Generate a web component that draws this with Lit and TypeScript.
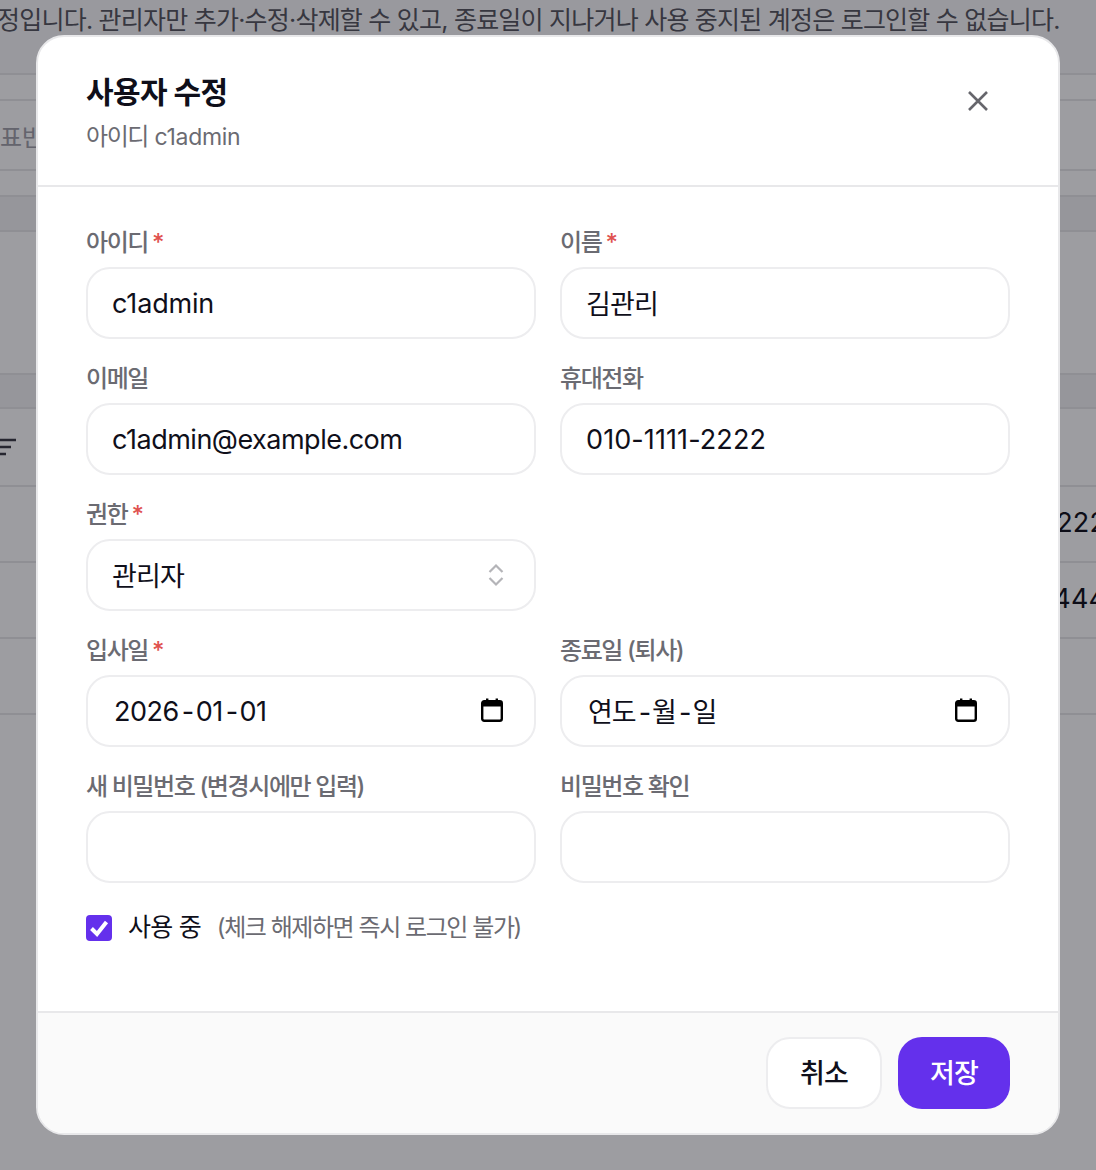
import { LitElement, html, css } from "lit";
import { customElement } from "lit/decorators.js";

const calendar = html`<svg class="cal" viewBox="0 0 22 24" width="22" height="24" aria-hidden="true">
  <path d="M5 0.5h2.4v3H5zM14.6 0.5H17v3h-2.4z" fill="#000"/>
  <rect x="1.2" y="3.2" width="19.6" height="19.6" rx="2" fill="none" stroke="#000" stroke-width="2.4"/>
  <rect x="1" y="3" width="20" height="5.5" fill="#000"/>
</svg>`;

@customElement("app-root")
export class AppRoot extends LitElement {
  static styles = css`
    :host {
      display: block;
      position: relative;
      width: 1096px;
      height: 1170px;
      overflow: hidden;
      background: #fff;
      font-family: Inter, "Noto Sans CJK KR", sans-serif;
      color: #0f0f1a;
    }
    .page { display: flex; flex-direction: column; }
    .notice {
      height: 73px;
      padding-top: 2px;
      margin-left: -3px;
      box-sizing: border-box;
      font-size: 25px;
      letter-spacing: -0.78px;
      line-height: 36px;
      color: #55555e;
      white-space: nowrap;
      background: #f9f9fa;
    }
    .row { border-top: 2px solid #e8e8ea; box-sizing: border-box; display: flex; align-items: center; justify-content: space-between; }
    .band { background: #f4f4f6; }
    .r1 { height: 26px; }
    .r2 { height: 70px; font-size: 24px; color: #a0a0a8; }
    .r3 { height: 26px; }
    .r4 { height: 35px; }
    .r5 { height: 143px; }
    .r6 { height: 34px; }
    .r7 { height: 78px; }
    .r8 { height: 76px; font-size: 27px; justify-content: flex-end; padding-bottom: 4px; }
    .r9 { height: 76px; }
    .r10 { height: 2px; }
    .num { white-space: nowrap; margin-right: -10px; letter-spacing: 0.1px; }
    .overlay {
      position: absolute;
      inset: 0;
      background: rgba(9, 9, 20, 0.4);
    }
    .modal {
      position: absolute;
      left: 36px;
      top: 35px;
      width: 1024px;
      height: 1100px;
      box-sizing: border-box;
      display: flex;
      flex-direction: column;
      background: #fff;
      border: 2px solid #e8e8ea;
      border-radius: 28px;
      overflow: hidden;
    }
    header {
      height: 150px;
      box-sizing: border-box;
      flex: none;
      display: flex;
      justify-content: space-between;
      align-items: flex-start;
      padding: 35px 48px 0;
      border-bottom: 2px solid #e8e8ea;
    }
    h2 { margin: 0; font-size: 30px; line-height: 40px; font-weight: 700; letter-spacing: -0.6px; }
    .sub { margin-top: 7px; font-size: 24px; line-height: 36px; color: #6b6b72; letter-spacing: -1.4px; }
    .sub-id { font-size: 23px; letter-spacing: -0.3px; margin-left: 1px; }
    .close { border: 0; background: none; padding: 0; width: 44px; height: 44px; margin: 7px 10px 0 0; display: flex; align-items: center; justify-content: center; }
    .body { flex: 1; padding: 40px 48px 0; }
    .grid { display: grid; grid-template-columns: 1fr 1fr; column-gap: 24px; row-gap: 24px; }
    label { display: block; height: 32px; margin-bottom: 8px; font-size: 24px; line-height: 32px; font-weight: 500; letter-spacing: -1.4px; color: #6b6b72; white-space: nowrap; }
    .req { color: #e0524f; margin-left: 4px; letter-spacing: 0; }
    .field {
      height: 72px;
      box-sizing: border-box;
      width: 100%;
      border: 2px solid #ededef;
      border-radius: 24px;
      padding: 0 24px;
      background: #fff;
      font: inherit;
      font-size: 27px;
      color: #0f0f1a;
      display: flex;
      align-items: center;
      justify-content: space-between;
      outline: none;
      letter-spacing: -0.85px;
    }
    .ko { padding-bottom: 2px; }
    .latin { letter-spacing: -0.17px; }
    .email { letter-spacing: -0.5px; padding-top: 1px; }
    .phone { letter-spacing: 0.1px; padding-top: 1px; }
    .date { padding-left: 26px; padding-right: 31px; }
    .dval { letter-spacing: -0.5px; padding-top: 1px; }
    .dko { letter-spacing: -1px; padding: 0 0 1px; }
    .sep { margin: 0 2px 0 3px; }
    .cal { margin-top: -2px; }
    .select { padding-right: 30px; }
    .updown { margin-top: 2px; }
    .check-row { display: flex; align-items: center; margin-top: 32px; height: 26px; }
    .box { width: 26px; height: 26px; border-radius: 4px; background: #6430ec; display: flex; align-items: center; justify-content: center; flex: none; }
    .check-label { margin: -6px 0 0 16px; font-size: 25px; font-weight: 400; letter-spacing: -0.8px; }
    .hint { margin: -6px 0 0 16px; font-size: 24px; color: #6b6b72; letter-spacing: -1.45px; }
    footer {
      height: 122px;
      box-sizing: border-box;
      flex: none;
      display: flex;
      justify-content: flex-end;
      gap: 16px;
      padding: 24px 48px 0;
      background: #fafafa;
      border-top: 2px solid #e8e8ea;
    }
    button.btn {
      height: 72px;
      box-sizing: border-box;
      border-radius: 24px;
      font: inherit;
      font-size: 27px;
      font-weight: 500;
      letter-spacing: -0.85px;
      padding-bottom: 4px;
    }
    .cancel { width: 116px; background: #fff; border: 2px solid #ededef; color: #0f0f1a; }
    .save { width: 112px; background: #6430ec; border: 0; color: #fff; }
  `;

  private req() {
    return html`<span class="req">*</span>`;
  }

  render() {
    return html`
      <div class="page">
        <div class="notice">정입니다. 관리자만 추가·수정·삭제할 수 있고, 종료일이 지나거나 사용 중지된 계정은 로그인할 수 없습니다.</div>
        <div class="row r1"></div>
        <div class="row r2"><span>표반</span></div>
        <div class="row r3"></div>
        <div class="row r4 band"></div>
        <div class="row r5"></div>
        <div class="row r6 band"></div>
        <div class="row r7"><svg width="16" height="18" viewBox="0 0 16 18" aria-hidden="true"><path d="M0 2h16M0 9h11M0 16h6" stroke="#3a3a44" stroke-width="2.4" fill="none"/></svg></div>
        <div class="row r8"><span class="num">010-1111-2222</span></div>
        <div class="row r8"><span class="num">010-3333-4444</span></div>
        <div class="row r9"></div>
        <div class="row r10"></div>
      </div>
      <div class="overlay"></div>
      <section class="modal">
        <header>
          <div>
            <h2>사용자 수정</h2>
            <div class="sub">아이디 <span class="sub-id">c1admin</span></div>
          </div>
          <button class="close" aria-label="닫기">
            <svg width="24" height="24" viewBox="0 0 24 24" aria-hidden="true"><path d="M3 3l18 18M21 3L3 21" stroke="#66666c" stroke-width="2.6" fill="none"/></svg>
          </button>
        </header>
        <div class="body">
          <div class="grid">
            <div><label>아이디${this.req()}</label><div class="field latin">c1admin</div></div>
            <div><label>이름${this.req()}</label><div class="field ko">김관리</div></div>
            <div><label>이메일</label><div class="field email">c1admin@example.com</div></div>
            <div><label>휴대전화</label><div class="field phone">010-1111-2222</div></div>
            <div><label>권한${this.req()}</label>
              <div class="field select ko">관리자
                <svg class="updown" width="16" height="24" viewBox="0 0 16 24" aria-hidden="true"><path d="M1.5 9L8 2.5 14.5 9M1.5 15L8 21.5 14.5 15" stroke="#b4b4b8" stroke-width="2.2" fill="none"/></svg>
              </div>
            </div>
            <div></div>
            <div><label>입사일${this.req()}</label><div class="field date"><span class="dval">2026<span class="sep">-</span>01<span class="sep">-</span>01</span>${calendar}</div></div>
            <div><label>종료일 (퇴사)</label><div class="field date"><span class="dval dko">연도<span class="sep">-</span>월<span class="sep">-</span>일</span>${calendar}</div></div>
            <div><label>새 비밀번호 (변경시에만 입력)</label><input class="field" type="password" /></div>
            <div><label>비밀번호 확인</label><input class="field" type="password" /></div>
          </div>
          <div class="check-row">
            <span class="box"><svg width="20" height="18" viewBox="0 0 20 18" aria-hidden="true"><path d="M2.5 9.5l5.5 5.5L17.5 3" stroke="#fff" stroke-width="4" fill="none"/></svg></span>
            <span class="check-label">사용 중</span>
            <span class="hint">(체크 해제하면 즉시 로그인 불가)</span>
          </div>
        </div>
        <footer>
          <button class="btn cancel">취소</button>
          <button class="btn save">저장</button>
        </footer>
      </section>
    `;
  }
}
